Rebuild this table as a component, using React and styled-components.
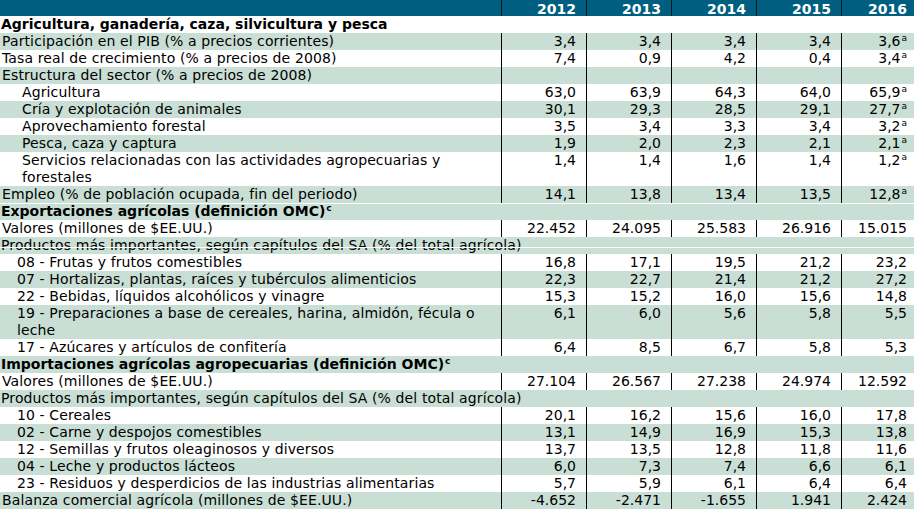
import React from "react";
import styled, { createGlobalStyle } from "styled-components";

const GlobalStyle = createGlobalStyle`
  html, body {
    margin: 0;
    padding: 0;
    background: #ffffff;
  }
  body {
    font-family: "DejaVu Sans", Verdana, sans-serif;
    font-size: 14px;
    color: #000000;
  }
`;

const COLS = "501px 85px 85px 85px 85px 73px";
const SHADE = "#c9dfd5";

const Table = styled.div`
  width: 914px;
  height: 510px;
  overflow: hidden;
`;

const HeadRow = styled.div`
  display: grid;
  grid-template-columns: ${COLS};
  height: 16px;
  background: #005f80;
`;

const HeadCell = styled.div`
  border-left: ${(p) => (p.$first ? "none" : "1px solid #0a1a22")};
  padding: 2px ${(p) => (p.$last ? "7px" : "10px")} 0 0;
  height: 14px;
  line-height: 14px;
  text-align: right;
  font-weight: bold;
  color: #ffffff;
`;

const Row = styled.div`
  position: relative;
  display: grid;
  grid-template-columns: ${COLS};
  min-height: 17px;
  line-height: 17px;
  background: ${(p) => (p.$shaded ? SHADE : "#ffffff")};
  box-shadow: ${(p) => (p.$split ? "inset 0 1px 0 #ffffff" : "none")};

  &::after {
    content: "";
    display: ${(p) => (p.$strike ? "block" : "none")};
    position: absolute;
    left: 0;
    right: 0;
    top: 10px;
    height: 1px;
    background: #ffffff;
  }
`;

const Label = styled.div`
  padding-left: ${(p) => p.$indent}px;
  letter-spacing: 0.12px;
  white-space: nowrap;
`;

const Title = styled.div`
  grid-column: 1 / -1;
  padding-left: ${(p) => p.$indent || 1}px;
  font-weight: ${(p) => (p.$bold ? "bold" : "normal")};
  letter-spacing: ${(p) => (p.$bold ? "0" : "0.12px")};
  white-space: nowrap;
`;

const Value = styled.div`
  border-left: 1px solid #000000;
  padding-right: ${(p) => (p.$last ? "7px" : "10px")};
  text-align: right;
  white-space: nowrap;
`;

const Note = styled.sup`
  font-size: 9px;
  line-height: 1;
  vertical-align: 5px;
  margin-left: 1px;
`;

const years = ["2012", "2013", "2014", "2015", "2016"];

const rows = [
  { kind: "title", bold: true, text: "Agricultura, ganadería, caza, silvicultura y pesca" },
  { label: "Participación en el PIB (% a precios corrientes)", values: ["3,4", "3,4", "3,4", "3,4", "3,6"], note: true, shaded: true },
  { label: "Tasa real de crecimiento (% a precios de 2008)", values: ["7,4", "0,9", "4,2", "0,4", "3,4"], note: true },
  { label: "Estructura del sector (% a precios de 2008)", values: ["", "", "", "", ""], shaded: true },
  { label: "Agricultura", indent: 22, values: ["63,0", "63,9", "64,3", "64,0", "65,9"], note: true },
  { label: "Cría y explotación de animales", indent: 22, values: ["30,1", "29,3", "28,5", "29,1", "27,7"], note: true, shaded: true },
  { label: "Aprovechamiento forestal", indent: 22, values: ["3,5", "3,4", "3,3", "3,4", "3,2"], note: true },
  { label: "Pesca, caza y captura", indent: 22, values: ["1,9", "2,0", "2,3", "2,1", "2,1"], note: true, shaded: true },
  { label: ["Servicios relacionadas con las actividades agropecuarias y", "forestales"], indent: 22, values: ["1,4", "1,4", "1,6", "1,4", "1,2"], note: true },
  { label: "Empleo (% de población ocupada, fin del periodo)", values: ["14,1", "13,8", "13,4", "13,5", "12,8"], note: true, shaded: true },
  { kind: "title", bold: true, text: "Exportaciones agrícolas (definición OMC)", sup: "c", shaded: true, split: true },
  { label: "Valores (millones de $EE.UU.)", values: ["22.452", "24.095", "25.583", "26.916", "15.015"] },
  { kind: "title", text: "Productos más importantes, según capítulos del SA (% del total agrícola)", shaded: true, strike: true },
  { label: "08 - Frutas y frutos comestibles", indent: 17, values: ["16,8", "17,1", "19,5", "21,2", "23,2"] },
  { label: "07 - Hortalizas, plantas, raíces y tubérculos alimenticios", indent: 17, values: ["22,3", "22,7", "21,4", "21,2", "27,2"], shaded: true },
  { label: "22 - Bebidas, líquidos alcohólicos y vinagre", indent: 17, values: ["15,3", "15,2", "16,0", "15,6", "14,8"] },
  { label: ["19 - Preparaciones a base de cereales, harina, almidón, fécula o", "leche"], indent: 17, values: ["6,1", "6,0", "5,6", "5,8", "5,5"], shaded: true },
  { label: "17 - Azúcares y artículos de confitería", indent: 17, values: ["6,4", "8,5", "6,7", "5,8", "5,3"] },
  { kind: "title", bold: true, text: "Importaciones agrícolas agropecuarias (definición OMC)", sup: "c", shaded: true },
  { label: "Valores (millones de $EE.UU.)", values: ["27.104", "26.567", "27.238", "24.974", "12.592"] },
  { kind: "title", text: "Productos más importantes, según capítulos del SA (% del total agrícola)", shaded: true },
  { label: "10 - Cereales", indent: 17, values: ["20,1", "16,2", "15,6", "16,0", "17,8"] },
  { label: "02 - Carne y despojos comestibles", indent: 17, values: ["13,1", "14,9", "16,9", "15,3", "13,8"], shaded: true },
  { label: "12 - Semillas y frutos oleaginosos y diversos", indent: 17, values: ["13,7", "13,5", "12,8", "11,8", "11,6"] },
  { label: "04 - Leche y productos lácteos", indent: 17, values: ["6,0", "7,3", "7,4", "6,6", "6,1"], shaded: true },
  { label: "23 - Residuos y desperdicios de las industrias alimentarias", indent: 17, values: ["5,7", "5,9", "6,1", "6,4", "6,4"] },
  { label: "Balanza comercial agrícola (millones de $EE.UU.)", values: ["-4.652", "-2.471", "-1.655", "1.941", "2.424"], shaded: true },
];

function DataRow({ row }) {
  const lines = Array.isArray(row.label) ? row.label : [row.label];
  return (
    <Row $shaded={row.shaded}>
      <Label $indent={row.indent || 2}>
        {lines.map((line, i) => (
          <React.Fragment key={i}>
            {i > 0 && <br />}
            {line}
          </React.Fragment>
        ))}
      </Label>
      {row.values.map((v, i) => (
        <Value key={years[i]} $last={i === years.length - 1}>
          {v}
          {row.note && i === years.length - 1 && v && <Note>a</Note>}
        </Value>
      ))}
    </Row>
  );
}

export default function App() {
  return (
    <>
      <GlobalStyle />
      <Table>
        <HeadRow>
          <HeadCell $first />
          {years.map((y, i) => (
            <HeadCell key={y} $last={i === years.length - 1}>
              {y}
            </HeadCell>
          ))}
        </HeadRow>
        {rows.map((row, i) =>
          row.kind === "title" ? (
            <Row key={i} $shaded={row.shaded} $split={row.split} $strike={row.strike}>
              <Title $bold={row.bold}>
                {row.text}
                {row.sup && <Note>{row.sup}</Note>}
              </Title>
            </Row>
          ) : (
            <DataRow key={i} row={row} />
          )
        )}
      </Table>
    </>
  );
}
